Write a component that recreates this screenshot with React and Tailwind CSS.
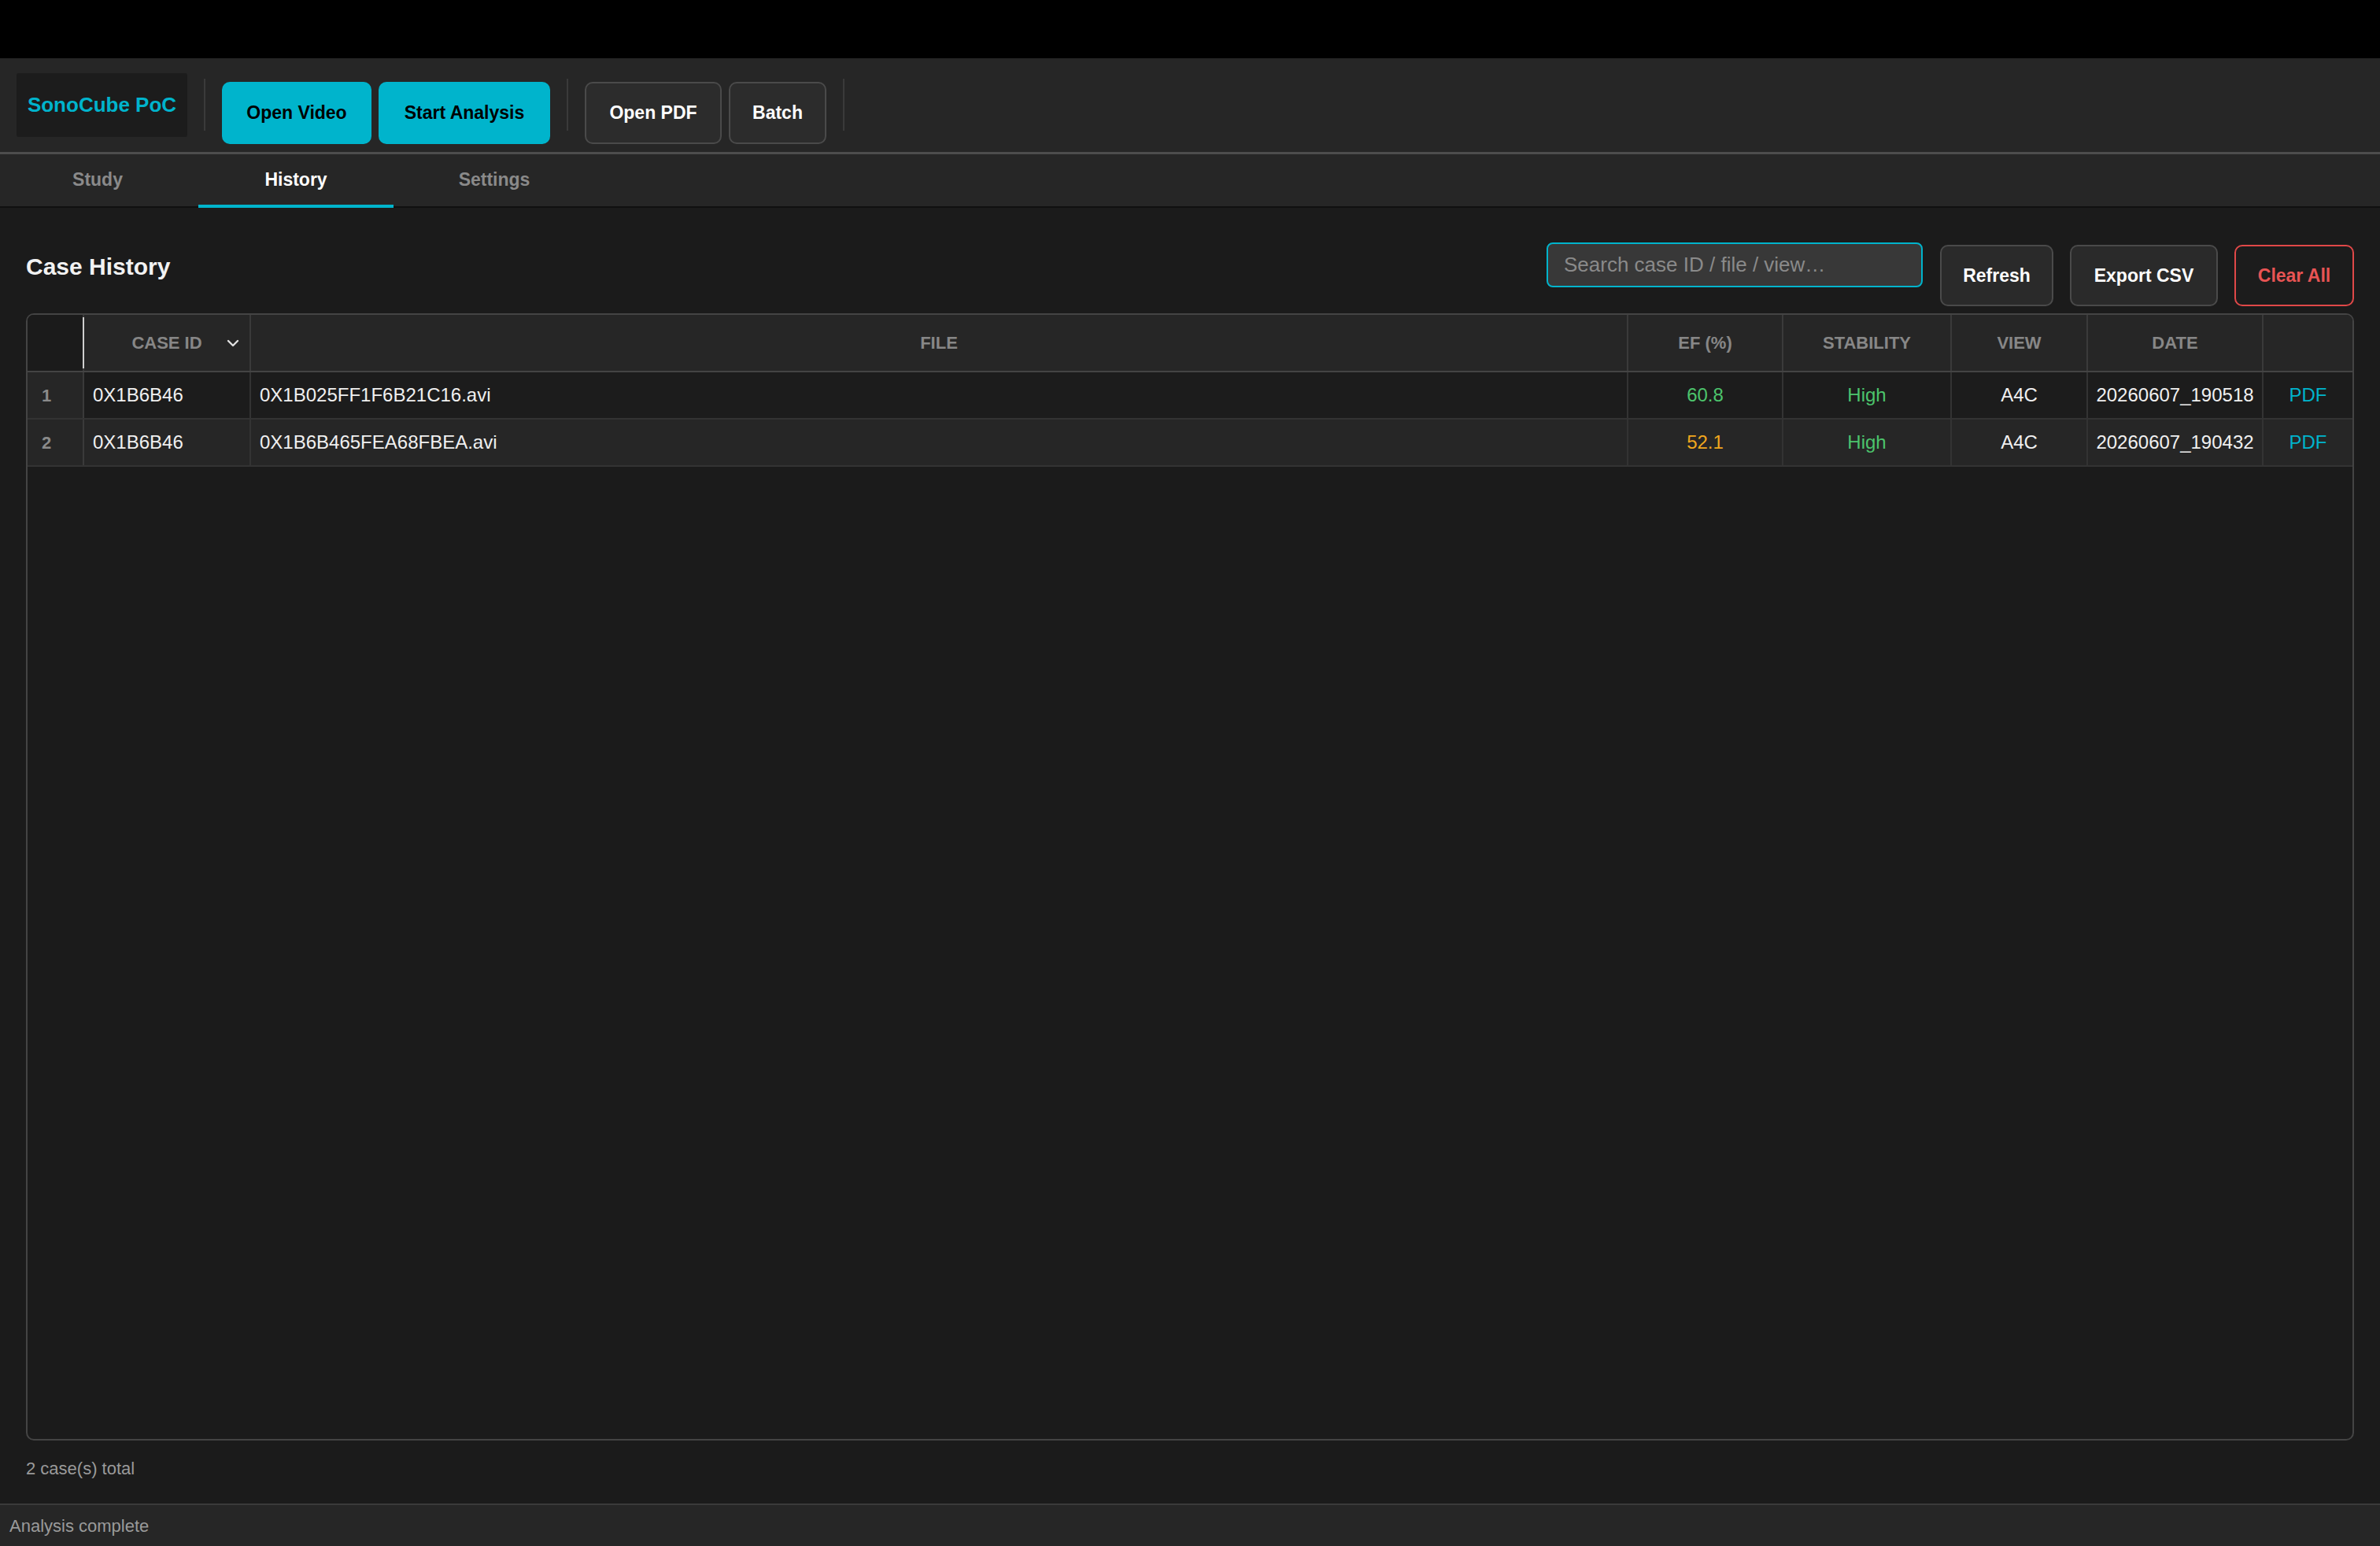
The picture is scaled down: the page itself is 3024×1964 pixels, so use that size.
import React, { useState } from "react";

// Case rows shown in the history table
const cases = [
    { id: "0X1B6B46", file: "0X1B025FF1F6B21C16.avi", ef: 60.8, stability: "High", view: "A4C", date: "20260607_190518" },
    { id: "0X1B6B46", file: "0X1B6B465FEA68FBEA.avi", ef: 52.1, stability: "High", view: "A4C", date: "20260607_190432" },
];

const columns = "grid grid-cols-[72px_212px_1fr_197px_214px_173px_223px_113px]";

const Separator = () => <div className="w-[2px] h-[66px] mt-[26px] mx-[12px] bg-[#3a3a3a]" />;

const App = () => {
    const [tab, setTab] = useState("History");
    const [query, setQuery] = useState("");

    const rows = cases.filter(c =>
        (c.id + c.file + c.view).toLowerCase().includes(query.toLowerCase())
    );

    return (
        <div className="h-[1964px] w-full flex flex-col bg-[#1b1b1b] text-[#f0f0f0] font-['Liberation_Sans',Arial,sans-serif]">
            {/* window title strip */}
            <div className="h-[74px] bg-black shrink-0" />

            {/* Toolbar */}
            <div className="h-[122px] shrink-0 bg-[#262626] border-b-[3px] border-[#4d4d4d] flex items-start pl-[21px] gap-[9px]">
                <div className="mt-[19px] h-[81px] w-[217px] bg-[#1c1c1c] rounded-[3px] flex items-center justify-center text-[26px] font-bold text-[#00b4cc]">
                    SonoCube PoC
                </div>
                <Separator />
                <button className="mt-[30px] h-[79px] w-[190px] rounded-[10px] bg-[#00b4cc] text-black text-[23px] font-bold">
                    Open Video
                </button>
                <button className="mt-[30px] h-[79px] w-[218px] rounded-[10px] bg-[#00b4cc] text-black text-[23px] font-bold">
                    Start Analysis
                </button>
                <Separator />
                <button className="mt-[30px] h-[79px] w-[174px] rounded-[10px] bg-[#2c2c2c] border-2 border-[#4a4a4a] text-white text-[23px] font-bold">
                    Open PDF
                </button>
                <button className="mt-[30px] h-[79px] w-[124px] rounded-[10px] bg-[#2c2c2c] border-2 border-[#4a4a4a] text-white text-[23px] font-bold">
                    Batch
                </button>
                <Separator />
            </div>

            {/* Tabs */}
            <div className="h-[68px] shrink-0 bg-[#262626] flex gap-[4px] shadow-[inset_0_-2px_0_#101010]">
                {["Study", "History", "Settings"].map(name => (
                    <button
                        key={name}
                        onClick={() => setTab(name)}
                        className={
                            name === tab
                                ? "w-[248px] h-full border-b-4 border-[#00b4cc] text-[23px] font-bold text-white"
                                : "w-[248px] h-full border-b-4 border-transparent text-[23px] font-bold text-[#8a8a8a]"
                        }
                    >
                        {name}
                    </button>
                ))}
            </div>

            {/* Content */}
            <div className="flex-1 min-h-0 flex flex-col px-[33px] pt-[44px]">
                <div className="h-[81px] shrink-0 flex items-start">
                    <h2 className="h-[60px] flex items-center text-[30px] font-bold text-[#f2f2f2]">Case History</h2>
                    <div className="flex-1" />
                    <input
                        value={query}
                        onChange={e => setQuery(e.target.value)}
                        placeholder="Search case ID / file / view…"
                        className="h-[57px] w-[478px] rounded-[8px] bg-[#383838] border-2 border-[#00b4cc] px-[20px] text-[26px] text-white placeholder:text-[#8a8a8a] outline-none"
                    />
                    <button className="ml-[22px] mt-[3px] h-[78px] w-[144px] rounded-[10px] bg-[#2a2a2a] border-2 border-[#4a4a4a] text-white text-[23px] font-bold">
                        Refresh
                    </button>
                    <button className="ml-[21px] mt-[3px] h-[78px] w-[188px] rounded-[10px] bg-[#2a2a2a] border-2 border-[#4a4a4a] text-white text-[23px] font-bold">
                        Export CSV
                    </button>
                    <button className="ml-[21px] mt-[3px] h-[78px] w-[152px] rounded-[10px] bg-[#1c1c1c] border-2 border-[#e04848] text-[#e85454] text-[23px] font-bold">
                        Clear All
                    </button>
                </div>

                {/* Table */}
                <div className="mt-[9px] flex-1 min-h-0 border-2 border-[#444444] rounded-[10px] overflow-hidden bg-[#1b1b1b]">
                    <div className={columns + " h-[73px] bg-[#262626] border-b-2 border-[#444444] text-[22px] font-bold text-[#878787] uppercase"}>
                        <div className="bg-[#1b1b1b] border-r-2 border-[#3a3a3a]" />
                        <div className="relative flex items-center justify-center border-r-2 border-[#3a3a3a]">
                            <span className="absolute left-[-2px] top-[3px] bottom-[3px] w-[2px] bg-[#cfcfcf]" />
                            Case ID
                            <svg className="absolute right-[13px] top-[31px]" width="16" height="11" viewBox="0 0 16 11" fill="none">
                                <polyline points="2,2 8,8 14,2" stroke="#e0e0e0" strokeWidth="2.4" strokeLinecap="round" strokeLinejoin="round" />
                            </svg>
                        </div>
                        <div className="flex items-center justify-center border-r-2 border-[#3a3a3a]">File</div>
                        <div className="flex items-center justify-center border-r-2 border-[#3a3a3a]">EF (%)</div>
                        <div className="flex items-center justify-center border-r-2 border-[#3a3a3a]">Stability</div>
                        <div className="flex items-center justify-center border-r-2 border-[#3a3a3a]">View</div>
                        <div className="flex items-center justify-center border-r-2 border-[#3a3a3a]">Date</div>
                        <div />
                    </div>

                    {rows.map((row, index) => (
                        <div
                            key={row.file}
                            className={columns + (index % 2 === 1 ? " bg-[#262626]" : " bg-[#1c1c1c]") + " h-[60px] border-b-2 border-[#333333] text-[24px]"}
                        >
                            <div className="bg-[#262626] flex items-center pl-[18px] text-[22px] font-bold text-[#8a8a8a] border-r-2 border-[#3a3a3a]">
                                {index + 1}
                            </div>
                            <div className="flex items-center pl-[11px] border-r-2 border-[#333333]">{row.id}</div>
                            <div className="flex items-center pl-[11px] border-r-2 border-[#333333]">{row.file}</div>
                            <div className={"flex items-center justify-center border-r-2 border-[#333333] " + (row.ef >= 55 ? "text-[#4cc46c]" : "text-[#f0a71e]")}>
                                {row.ef.toFixed(1)}
                            </div>
                            <div className="flex items-center justify-center border-r-2 border-[#333333] text-[#4cc46c]">{row.stability}</div>
                            <div className="flex items-center justify-center border-r-2 border-[#333333]">{row.view}</div>
                            <div className="flex items-center justify-center border-r-2 border-[#333333]">{row.date}</div>
                            <div className="flex items-center justify-center text-[#00b4cc]">PDF</div>
                        </div>
                    ))}
                </div>

                <div className="h-[80px] shrink-0 pt-[25px] text-[22px] leading-[22px] text-[#9a9a9a]">
                    {rows.length} case(s) total
                </div>
            </div>

            {/* Status bar */}
            <div className="h-[54px] shrink-0 bg-[#262626] border-t-2 border-[#3a3a3a] flex items-center pl-[12px] text-[22px] text-[#9a9a9a]">
                Analysis complete
            </div>
        </div>
    );
};

export default App;
